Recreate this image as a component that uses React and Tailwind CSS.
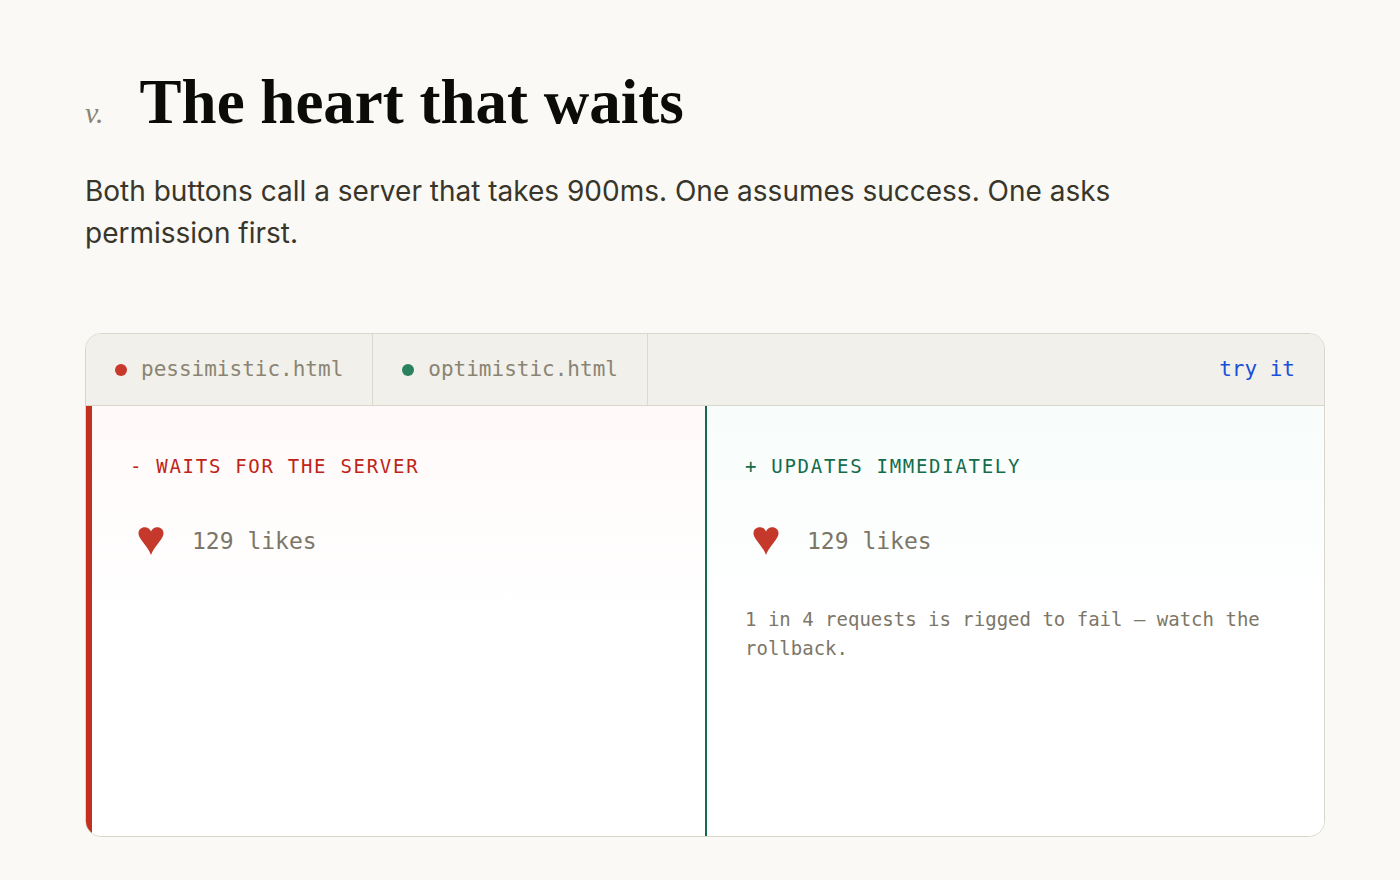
import { useState } from 'react';

const Heart = () => (
  <svg viewBox="0 0 26 28" className="h-7 w-[26px]" fill="currentColor" aria-hidden="true">
    <path d="M13 28C12.2 25.6 10.6 22.8 8 19.2L3 12.4C1.4 10.2 0.5 8.4 0.5 6.2C0.5 2.6 3.2 0.2 6.8 0.2C9.8 0.2 12 1.9 13 4.6C14 1.9 16.2 0.2 19.2 0.2C22.8 0.2 25.5 2.6 25.5 6.2C25.5 8.4 24.6 10.2 23 12.4L18 19.2C15.4 22.8 13.8 25.6 13 28Z" />
  </svg>
);

const Tab = ({ name, dot }) => (
  <button
    type="button"
    className="flex items-center gap-3.5 border-r border-[#dbdacf] px-[29px] text-[21px] text-[#8a8473]"
  >
    <span className={`h-3 w-3 rounded-full ${dot}`}></span>
    {name}
  </button>
);

const LikeRow = ({ optimistic }) => {
  const [likes, setLikes] = useState(129);

  const handleClick = () => {
    if (!optimistic) {
      setTimeout(() => setLikes((n) => n + 1), 900);
      return;
    }
    setLikes((n) => n + 1);
    // roll back when the request fails
    setTimeout(() => {
      if (Math.random() < 0.25) setLikes((n) => n - 1);
    }, 900);
  };

  return (
    <div className="mt-[39px] flex items-center gap-5">
      <button
        type="button"
        aria-label="Like"
        onClick={handleClick}
        className="flex h-11 w-[42px] items-center justify-center text-[#c4392b]"
      >
        <Heart />
      </button>
      <span className="text-[23px] text-[#7c7668]">{likes} likes</span>
    </div>
  );
};

const App = () => {
  return (
    <div className="min-h-screen bg-[#faf9f5]">
      <main className="pt-16 pr-[75px] pb-11 pl-[85px]">
        {/* Heading */}
        <header className="flex items-baseline gap-9 font-['Liberation_Serif',serif]">
          <span className="text-[30px] text-[#8a8473] italic">v.</span>
          <h1 className="text-[63px] leading-[76px] font-bold text-[#0b0b0a]">The heart that waits</h1>
        </header>
        <p className="mt-[30px] max-w-[1100px] font-['Inter',sans-serif] text-[28px] leading-[42px] text-[#38362a]">
          Both buttons call a server that takes 900ms. One assumes success. One asks permission first.
        </p>

        {/* Demo */}
        <section className="mt-[79px] overflow-hidden rounded-2xl border border-[#d8d7cb] bg-white font-['DejaVu_Sans_Mono',monospace]">
          <div className="flex h-[72px] border-b border-[#d8d7cb] bg-[#f1f0eb]">
            <Tab name="pessimistic.html" dot="bg-[#c8392b]" />
            <Tab name="optimistic.html" dot="bg-[#2a8160]" />
            <a href="#try" className="ml-auto flex items-center px-[29px] text-[21px] text-[#1a4fd8]">
              try it
            </a>
          </div>
          <div className="grid min-h-[430px] grid-cols-2">
            <div className="border-l-6 border-[#c4301f] bg-linear-to-b from-[#fffaf9] to-white to-50% px-[38px] pt-[46px]">
              <h2 className="text-[19px] leading-7 tracking-[0.09em] text-[#bf2418] uppercase">- Waits for the server</h2>
              <LikeRow />
            </div>
            <div className="border-l-2 border-[#136c4b] bg-linear-to-b from-[#f8fdfb] to-white to-50% px-[38px] pt-[46px]">
              <h2 className="text-[19px] leading-7 tracking-[0.09em] text-[#136c4b] uppercase">+ Updates immediately</h2>
              <LikeRow optimistic />
              <p className="mt-[42px] text-[19px] leading-[29px] text-[#7c7668]">
                1 in 4 requests is rigged to fail — watch the rollback.
              </p>
            </div>
          </div>
        </section>
      </main>
    </div>
  );
};

export default App;
